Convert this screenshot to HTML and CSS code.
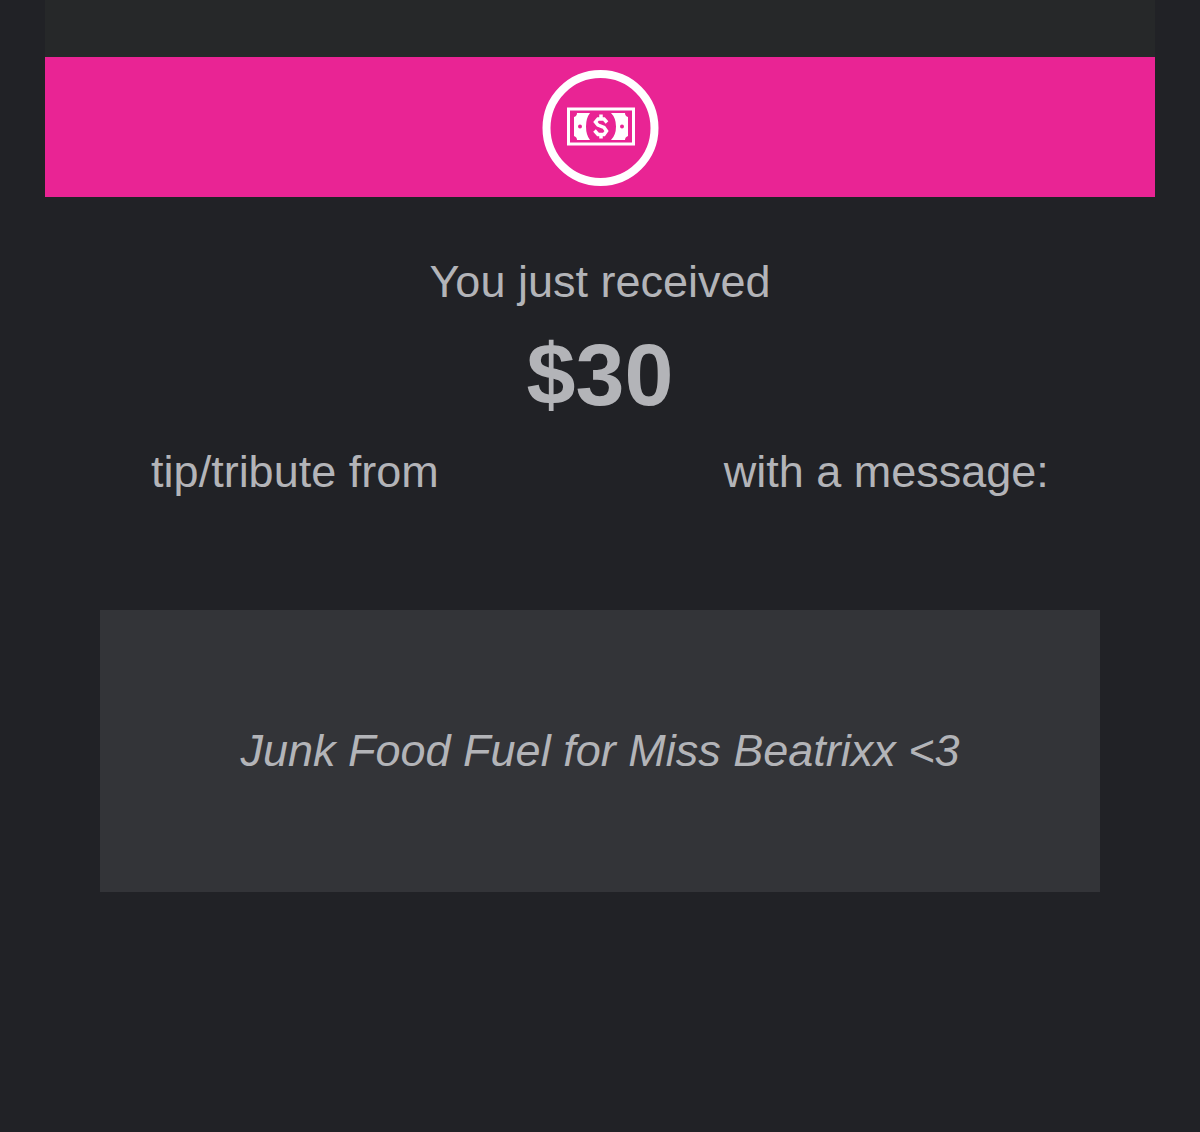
FILE: index.html
```html
<!DOCTYPE html>
<html lang="en">
<head>
    <meta charset="UTF-8">
    <meta name="viewport" content="width=device-width, initial-scale=1.0">
    <title>You just received $30</title>
    <link rel="stylesheet" href="styles.css">
</head>
<body>
    <div class="top-strip"></div>
    <header class="banner">
        <svg class="banner-icon" viewBox="0 0 118 118" aria-hidden="true">
            <circle cx="59.500" cy="59" r="54" fill="none" stroke="#fff" stroke-width="8"/>
            <!-- banknote -->
            <rect x="27.500" y="40" width="65" height="35" fill="none" stroke="#fff" stroke-width="3"/>
            <path fill="#fff" d="M36 44H49Q45 49 45 57.500T49 71H36Q36 68 33 67V48Q36 47 36 44ZM70 44H84Q84 47 87 48V67Q84 68 84 71H70Q75 66 75 57.500T70 44Z"/>
            <circle class="note-dot" cx="39" cy="57.500" r="2"/>
            <circle class="note-dot" cx="81" cy="57.500" r="2"/>
            <!-- dollar sign -->
            <path fill="none" stroke="#fff" stroke-width="3.500" d="M66 53.500L63 50H57L54.500 53L57 56L63 58.500L65.500 62L63 65.500H57L53.500 61.500M60 45.500V50M60 65V69.500"/>
        </svg>
    </header>

    <main class="content">
        <p class="line">You just received</p>
        <h1 class="amount">$30</h1>
        <p class="line">tip/tribute from <span class="sender"></span> with a message:</p>
        <blockquote class="message">Junk Food Fuel for Miss Beatrixx &lt;3</blockquote>
    </main>
</body>
</html>
```

FILE: styles.css
```css
body {
    margin: 0;
    padding: 0 45px;
    background-color: #212226;
    color: #b3b4b8;
    font-family: "Liberation Sans", Arial, sans-serif;
    font-size: 45px;
    line-height: 60px;
}
.top-strip {
    height: 57px;
    background-color: #262829;
}
.banner {
    display: flex;
    justify-content: center;
    padding: 12px 0 10px;
    background-color: #e92494;
}
.banner-icon {
    width: 118px;
    height: 118px;
}
.note-dot {
    fill: #e92494;
}
.content {
    padding: 55px 55px 64px;
    text-align: center;
}
.line {
    margin: 0;
}
.amount {
    margin: 0 0 4px;
    font-size: 88px;
    line-height: 126px;
}
.sender {
    display: inline-block;
    width: 260px;
}
.message {
    margin: 108px 0 0;
    padding: 111px 40px;
    background-color: #333438;
    font-style: italic;
}
```
